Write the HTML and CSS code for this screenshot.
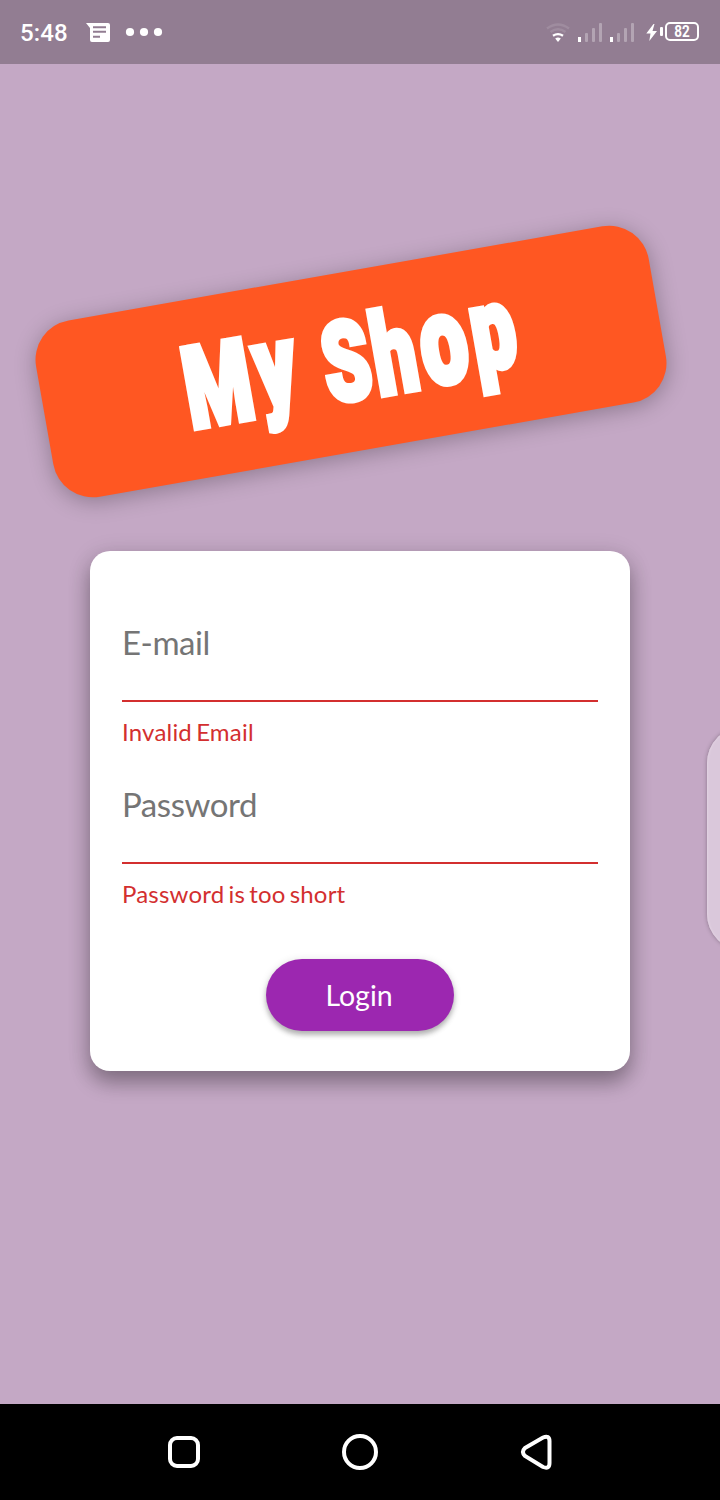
FILE: index.html
```html
<!DOCTYPE html>
<html lang="en">
<head>
<meta charset="utf-8">
<title>My Shop</title>
<link rel="stylesheet" href="styles.css">
</head>
<body>
<div class="screen">
  <header class="status">
    <span class="clock">5:48</span>
    <svg class="message" width="24" height="20" viewBox="0 0 24 20"><path fill="#fff" fill-rule="evenodd" d="M0 0H22Q24 0 24 2V17Q24 19 22 19H6Q4 19 4 17V5ZM7 3.200V5.200H20V3.200ZM7 7.800V9.800H20V7.800ZM7 12.800V14.800H14V12.800Z"/></svg>
    <svg class="dots" width="38" height="10" viewBox="0 0 38 10" fill="#fff"><circle cx="5" cy="5" r="4.1"/><circle cx="19" cy="5" r="4.1"/><circle cx="33" cy="5" r="4.1"/></svg>
    <svg class="indicators" width="156" height="24" viewBox="544 20 156 24">
      <g fill="none" stroke="#fff" stroke-width="2.4">
        <path opacity=".12" d="M547 28.5Q558 20.500 569 28.500"/>
        <path opacity=".12" d="M550.500 32Q558 26.500 565.500 32"/>
        <path d="M553 35.800Q558 32.500 563 35.800"/>
      </g>
      <path fill="#fff" d="M555.200 38.500Q558 36.500 560.800 38.500L558 42Z"/>
      <g fill="#fff">
        <rect x="578" y="37" width="3" height="5"/>
        <g opacity=".3"><rect x="585" y="33" width="3" height="9" rx="1"/><rect x="592" y="28" width="3" height="14" rx="1"/><rect x="599" y="23" width="3" height="19" rx="1"/></g>
        <rect x="610" y="37" width="3" height="5"/>
        <g opacity=".3"><rect x="617" y="33" width="3" height="9" rx="1"/><rect x="624" y="28" width="3" height="14" rx="1"/><rect x="631" y="23" width="3" height="19" rx="1"/></g>
        <path d="M653.500 24L646.300 33.500H650.500L649.300 41L657 31H652.500L654.500 24Z"/>
        <rect x="660" y="27" width="3" height="9" rx="1"/>
      </g>
      <rect x="666" y="23" width="32" height="17" rx="4" fill="none" stroke="#fff" stroke-width="2"/>
      <text class="level" x="682" y="37" text-anchor="middle" textLength="15.500" lengthAdjust="spacingAndGlyphs">82</text>
    </svg>
  </header>
  <main class="content">
    <h1 class="banner">
      <svg width="622" height="179" viewBox="0 0 622 179" role="img" aria-label="My Shop">
        <g transform="translate(143.500 128) scale(.68 1)">
          <text class="logo"><tspan x="-2" y="0">M</tspan><tspan class="hang" x="105" y="-8">y</tspan> <tspan class="cap" x="205" y="-1">S</tspan><tspan x="279" y="0">h</tspan><tspan class="round" x="350" y="-1">o</tspan><tspan class="hang" x="427" y="-7">p</tspan></text>
        </g>
      </svg>
    </h1>
    <form class="card">
      <div class="field"><div class="entry">E-mail</div><div class="error">Invalid Email</div></div>
      <div class="field"><div class="entry">Password</div><div class="error">Password is too short</div></div>
      <button class="login" type="button">Login</button>
    </form>
    <div class="handle"></div>
  </main>
  <nav class="nav">
    <svg width="720" height="96" viewBox="0 0 720 96" fill="none" stroke="#fff" stroke-width="4">
      <rect x="170" y="34" width="28" height="28" rx="7"/>
      <circle cx="360" cy="48" r="16"/>
      <path d="M525 44L543 33.500Q549.500 31 549.500 37V59Q549.500 65.500 543 63L525 52Q521 48 525 44Z"/>
    </svg>
  </nav>
</div>
</body>
</html>
```
FILE: styles.css
```css
* { box-sizing: border-box; }
body { margin: 0; }
.screen {
  width: 720px;
  height: 1500px;
  display: flex;
  flex-direction: column;
  background: #c4a8c5;
  font-family: Lato, sans-serif;
  overflow: hidden;
}
.status {
  height: 64px;
  display: flex;
  align-items: center;
  padding: 0 20px;
  background: #927d92;
  color: #fff;
}
.clock { width: 66px; padding-top: 2px; font: 500 24px/28px Roboto, sans-serif; letter-spacing: .1px; }
.message { margin-top: 1px; }
.dots { margin-left: 15px; }
.indicators { margin-left: auto; }
.level { font: 700 16px Roboto, sans-serif; fill: #fff; }
.content {
  position: relative;
  flex: 1;
  display: flex;
  flex-direction: column;
  align-items: center;
}
.banner {
  width: 622px;
  height: 179px;
  margin: 208px 18px 100px 0;
  border-radius: 40px;
  background: #ff5722;
  box-shadow: 0 4px 22px rgba(0, 0, 0, .28);
  transform: rotate(-10deg);
}
.banner svg { display: block; }
.logo {
  font: 900 113px Roboto, sans-serif;
  fill: #fff;
  stroke: #fff;
  stroke-width: 6.5px;
}
.cap { font-size: 110px; }
.hang { font-size: 115px; }
.round { font-size: 123px; }
.card {
  width: 540px;
  height: 520px;
  padding: 48px 32px 40px;
  display: flex;
  flex-direction: column;
  border-radius: 20px;
  background: #fff;
  box-shadow: 0 12px 20px rgba(0, 0, 0, .28), 0 4px 24px rgba(0, 0, 0, .14);
}
.field { height: 162px; }
.entry {
  height: 103px;
  padding-top: 23px;
  border-bottom: 2px solid #d32f2f;
  color: #757575;
  font-size: 33px;
  line-height: 40px;
  letter-spacing: -.45px;
}
.error {
  padding-top: 15px;
  color: #d32f2f;
  font-size: 24px;
  line-height: 29px;
  letter-spacing: .2px;
  word-spacing: -2.2px;
}
.login {
  width: 188px;
  height: 72px;
  margin: auto auto 0;
  padding: 0 8px 0 6px;
  border: 0;
  border-radius: 36px;
  background: #9c27b0;
  color: #fff;
  font: 28.5px Lato, sans-serif;
  box-shadow: 0 4px 5px rgba(0, 0, 0, .25), 0 1px 8px rgba(0, 0, 0, .12);
}
.handle {
  position: absolute;
  left: 707px;
  top: 663px;
  width: 80px;
  height: 223px;
  border-radius: 36px;
  background: #dac8db;
  box-shadow: inset 1px 0 2px #e2d2e2, 0 0 4px rgba(0, 0, 0, .3);
}
.nav { height: 96px; background: #000; }
.nav svg { display: block; }
```
